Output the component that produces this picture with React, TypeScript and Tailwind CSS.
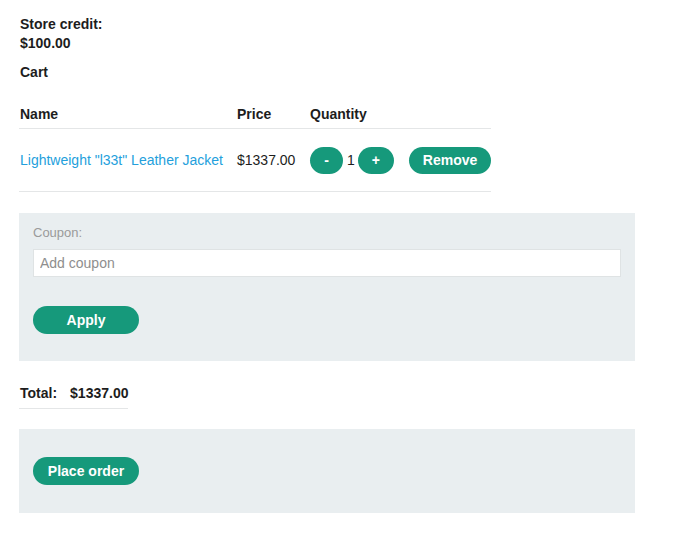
import React from "react";

const green = "bg-[#16997b]";

function PillButton({ label, className = "" }: { label: string; className?: string }) {
  return (
    <button
      type="button"
      className={`${green} h-[27px] rounded-full px-[14px] text-[14px] font-bold leading-none text-white ${className}`}
    >
      {label}
    </button>
  );
}

export default function App() {
  return (
    <div className="min-h-[559px] bg-white pl-[19px] pt-[15px] text-[14px] leading-[19px] text-[#1d1d1d] [font-family:'Liberation_Sans',Arial,sans-serif]">
      <div className="pl-px font-bold">
        <div>Store credit:</div>
        <div>$100.00</div>
      </div>
      <div className="mt-[10px] pl-px font-bold">Cart</div>

      {/* cart table */}
      <div className="mt-[23px] w-[472px]">
        <div className="flex border-b border-[#e4e6e7] pb-[4px] font-bold">
          <div className="w-[218px] shrink-0 pl-px">Name</div>
          <div className="w-[73px] shrink-0">Price</div>
          <div>Quantity</div>
        </div>
        <div className="flex h-[63px] items-center border-b border-[#e4e6e7]">
          <div className="w-[218px] shrink-0 pl-px">
            <a href="#" className="text-[#249fdc]">
              Lightweight "l33t" Leather Jacket
            </a>
          </div>
          <div className="w-[73px] shrink-0">$1337.00</div>
          <div className="flex items-center">
            <PillButton label="-" className="w-[33px] px-0" />
            <span className="ml-[4px] mr-[3px]">1</span>
            <PillButton label="+" className="w-[36px] px-0" />
            <PillButton label="Remove" className="ml-[15px] w-[82px] px-0" />
          </div>
        </div>
      </div>

      {/* coupon */}
      <div className="mt-[21px] w-[616px] bg-[#e9eef0] pb-[27px] pl-[14px] pr-[14px] pt-[10px]">
        <label className="block text-[13px] text-[#9a9a9a]">Coupon:</label>
        <input
          type="text"
          placeholder="Add coupon"
          className="mt-[7px] block h-[28px] w-[588px] border border-[#dfe3e4] bg-white px-[6px] text-[14px] text-[#333] outline-none placeholder:text-[#8e8e8e]"
        />
        <PillButton label="Apply" className="mt-[29px] h-[28px] w-[106px] px-0" />
      </div>

      {/* total */}
      <div className="mt-[23px] inline-flex gap-[13px] border-b border-[#e4e6e7] pb-[5px] font-bold">
        <span className="pl-px">Total:</span>
        <span>$1337.00</span>
      </div>

      {/* order */}
      <div className="mt-[20px] w-[616px] bg-[#e9eef0] pb-[28px] pl-[14px] pt-[28px]">
        <PillButton label="Place order" className="h-[28px] w-[106px] px-0" />
      </div>
    </div>
  );
}
